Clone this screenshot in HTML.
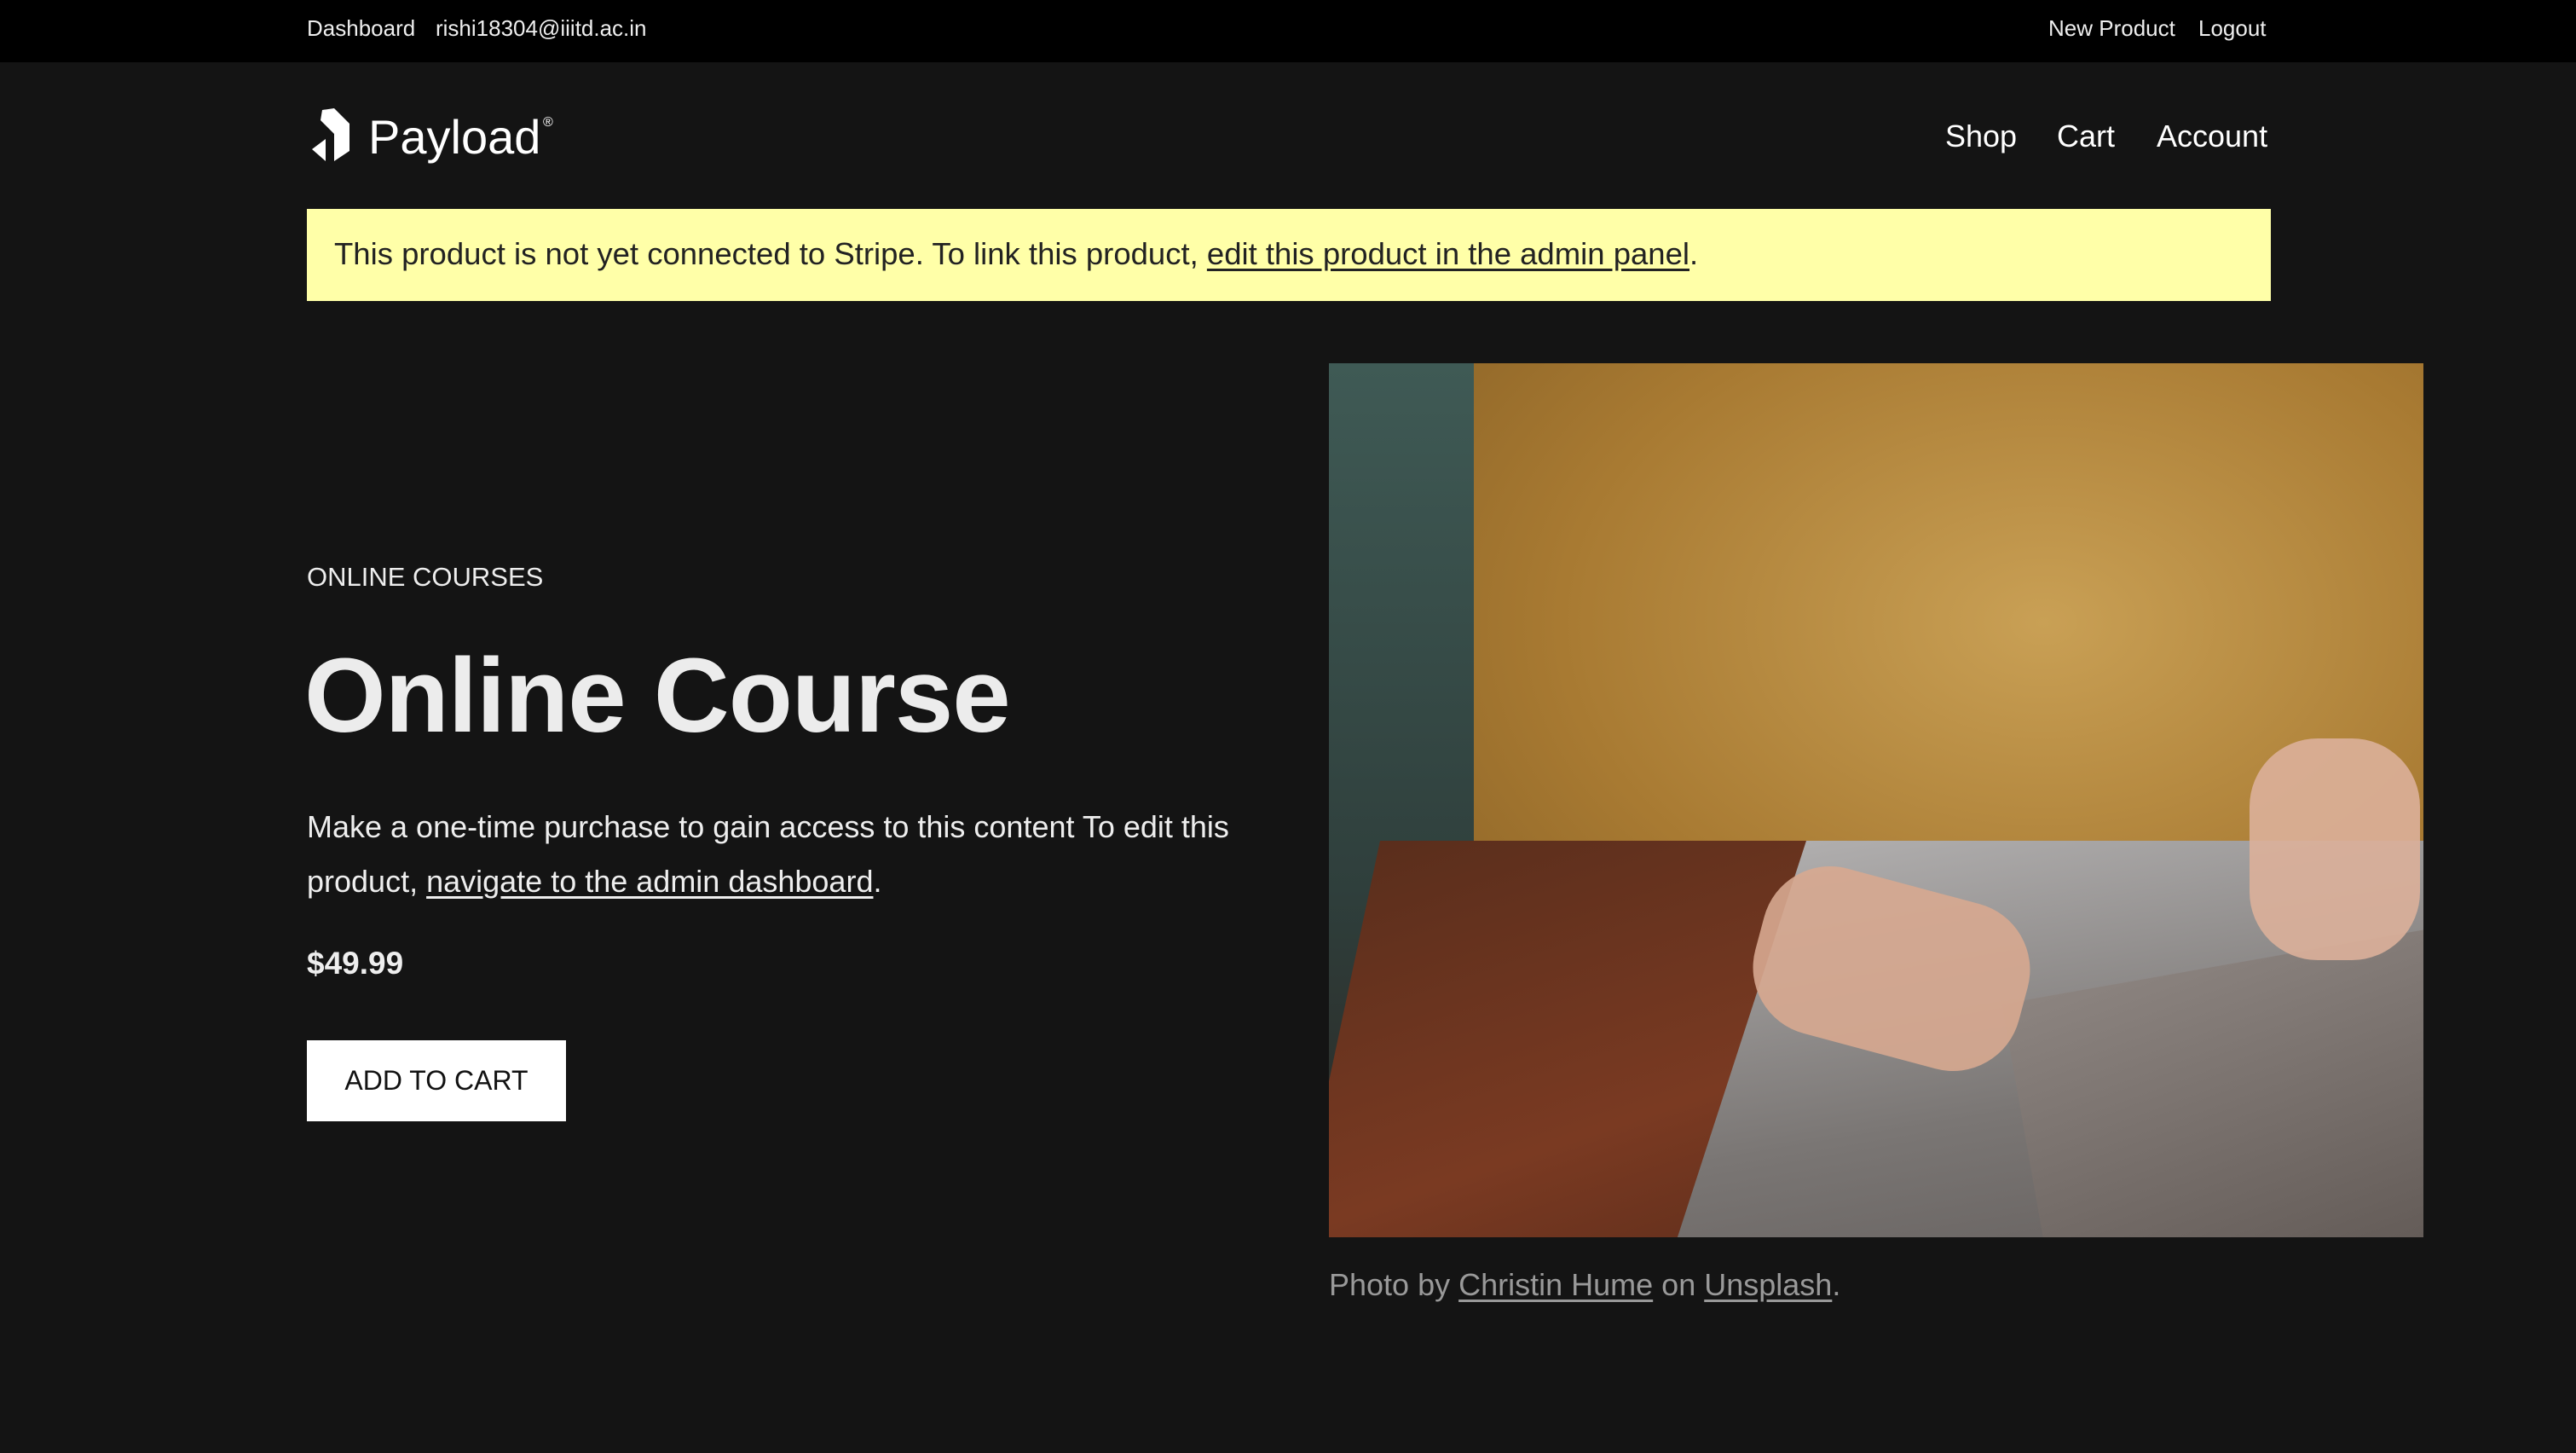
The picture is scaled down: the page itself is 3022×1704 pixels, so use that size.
<!DOCTYPE html>
<html><head><meta charset="utf-8"><style>
*{margin:0;padding:0;box-sizing:border-box}
body{width:3022px;height:1704px;background:#141414;color:#fff;font-family:"Liberation Sans",sans-serif;position:relative;overflow:hidden}
.top{position:absolute;left:0;top:0;width:3022px;height:73px;background:#000;font-size:26px;color:#eee}
.top span{position:absolute;top:18px}
.abs{position:absolute;white-space:nowrap}
u{text-decoration:underline;text-underline-offset:5px}
</style></head><body>
<div class="top"><span style="left:360px">Dashboard</span><span style="left:511px">rishi18304@iiitd.ac.in</span><span style="left:2403px">New Product</span><span style="left:2579px">Logout</span></div>
<svg class="abs" style="left:366px;top:127px" width="50" height="62" viewBox="0 0 50 62"><polygon points="12,2 26,0 44,18 44,50 26,62 26,30 10,14" fill="#fff"/><polygon points="0,48 16,36 16,62" fill="#fff"/></svg>
<div class="abs" style="left:432px;top:128px;font-size:56px;color:#fff">Payload</div>
<div class="abs" style="left:637px;top:135px;font-size:16px">®</div>
<div class="abs" style="left:2282px;top:139px;font-size:36px">Shop</div>
<div class="abs" style="left:2413px;top:139px;font-size:36px">Cart</div>
<div class="abs" style="left:2530px;top:139px;font-size:36px">Account</div>
<div class="abs" style="left:360px;top:245px;width:2304px;height:108px;background:#ffffa8;color:#222;font-size:36.5px;padding:32px 0 0 32px">This product is not yet connected to Stripe. To link this product, <u>edit this product in the admin panel</u>.</div>
<div class="abs" style="left:360px;top:659px;font-size:31px;color:#eee">ONLINE COURSES</div>
<div class="abs" style="left:357px;top:746px;font-size:123px;font-weight:bold;color:#ececec;letter-spacing:-1px">Online Course</div>
<div class="abs" style="left:360px;top:938px;width:1150px;font-size:36px;line-height:64px;color:#eee;white-space:normal">Make a one-time purchase to gain access to this content To edit this product, <u>navigate to the admin dashboard</u>.</div>
<div class="abs" style="left:360px;top:1109px;font-size:37px;font-weight:bold;color:#eee">$49.99</div>
<div class="abs" style="left:360px;top:1220px;width:304px;height:95px;background:#fff;color:#111;font-size:32px;text-align:center;line-height:95px">ADD TO CART</div>
<div class="abs" style="left:1559px;top:426px;width:1284px;height:1025px;overflow:hidden;background:#2e3a36">
<div style="position:absolute;left:0;top:0;width:300px;height:1025px;background:linear-gradient(180deg,#3f5a55,#2f3f3c 60%,#2a2622)"></div>
<div style="position:absolute;left:170px;top:0;width:1114px;height:760px;background:radial-gradient(ellipse at 60% 40%,#c9a055,#a87a32 60%,#8a6226)"></div>
<div style="position:absolute;left:60px;top:560px;width:600px;height:700px;background:linear-gradient(160deg,#5a2e1c,#7a3a22 50%,#4a2416);transform:skewX(-12deg);transform-origin:top left"></div>
<div style="position:absolute;left:560px;top:560px;width:900px;height:600px;background:linear-gradient(170deg,#b0aeae,#7a7674 50%,#5a5452);transform:skewX(-18deg);transform-origin:top left"></div>
<div style="position:absolute;left:820px;top:700px;width:560px;height:400px;background:linear-gradient(170deg,#8c8480,#5e5652);transform:rotate(-10deg)"></div>
<div style="position:absolute;left:500px;top:610px;width:320px;height:200px;background:#d7a890;border-radius:80px;opacity:.9;transform:rotate(15deg)"></div>
<div style="position:absolute;left:1080px;top:440px;width:200px;height:260px;background:#dcb09a;border-radius:80px;opacity:.9"></div>
</div>
<div class="abs" style="left:1559px;top:1486px;font-size:36px;color:#999">Photo by <u>Christin Hume</u> on <u>Unsplash</u>.</div>
</body></html>
